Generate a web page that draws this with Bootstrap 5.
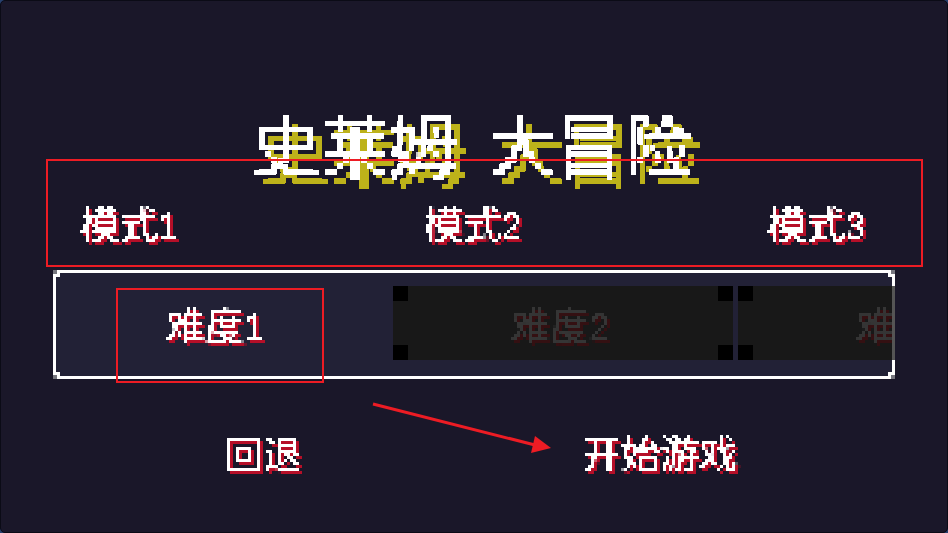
<!DOCTYPE html>
<html lang="zh-CN">
<head>
<meta charset="utf-8">
<title>史莱姆 大冒险</title>
<link rel="stylesheet" href="https://cdn.jsdelivr.net/npm/bootstrap@5.3.0/dist/css/bootstrap.min.css">
<style>
html,body{height:100%;margin:0;background:#27406e;overflow:hidden}
body{font-family:"Noto Sans CJK SC","Liberation Sans",sans-serif}
.stage{width:948px;height:533px;background:#1a1729;border:1px solid #0b0b16;border-radius:5px;position:relative;overflow:hidden}
.game-title{font-size:68px;line-height:68px;height:68px;margin:108px 0 0 0;padding-right:4px;color:#fff;white-space:pre;word-spacing:15px;font-weight:400;filter:url(#px6) drop-shadow(9px 9px 0 #bdb21a)}
.pix{font-size:39px;line-height:44px;height:44px;color:#fff;white-space:nowrap;filter:url(#px3) drop-shadow(3px 3px 0 #b50f28)}
.dg{font-family:"Liberation Sans Narrow","Liberation Sans",sans-serif;font-size:36px;line-height:1}
.mode-row{padding:23px 82px 0 79px}
.diff-panel{height:109px;width:842px;margin:26px 0 0 52px;border:3px solid #fff;background:#222136;position:relative}
.diff-clip{height:100%;overflow:hidden}
.diff-track{width:1200px;margin-left:-8px;gap:5px;height:74px;margin-top:13px}
.diff-item{flex:0 0 340px;position:relative}
.diff-item .pix{margin-right:6px}
.diff-off{background:#181818}
.diff-off .pix{color:#353535;filter:url(#px3) drop-shadow(3px 3px 0 #341012)}
.nick{position:absolute;width:15px;height:15px;background:#000}
.nick-a{top:0;left:0}.nick-b{top:0;right:0}.nick-c{bottom:0;left:0}.nick-d{bottom:0;right:0}
.edge-shade{position:absolute;right:-3px;top:13px;width:3px;height:74px;background:#555}
.step{position:absolute;width:4px;height:4px;background:#77777f}
.step-a{left:-3px;top:-3px;box-shadow:3px 3px 0 #fff}
.step-b{right:-3px;top:-3px;box-shadow:-3px 3px 0 #fff}
.step-c{left:-3px;bottom:-3px;box-shadow:3px -3px 0 #fff}
.step-d{right:-3px;bottom:-3px;box-shadow:-3px -3px 0 #fff}
.action-row{padding:50px 0 0 223px;gap:280px}
.notes{position:absolute;left:-1px;top:-1px;pointer-events:none}
</style>
</head>
<body>
<svg width="0" height="0" class="position-absolute">
  <defs>
    <filter id="px6" x="-5%" y="-20%" width="110%" height="140%" primitiveUnits="userSpaceOnUse" color-interpolation-filters="sRGB">
      <feFlood x="2" y="2" width="2" height="2" flood-color="#fff"/>
      <feComposite width="6" height="6"/>
      <feTile result="dots"/>
      <feComposite in="SourceGraphic" in2="dots" operator="in"/>
      <feComponentTransfer><feFuncA type="linear" slope="30" intercept="-9"/></feComponentTransfer>
      <feMorphology operator="dilate" radius="2"/>
    </filter>
    <filter id="px3" x="-5%" y="-20%" width="110%" height="140%" primitiveUnits="userSpaceOnUse" color-interpolation-filters="sRGB">
      <feFlood x="1" y="1" width="1" height="1" flood-color="#fff"/>
      <feComposite width="3" height="3"/>
      <feTile result="dots"/>
      <feComposite in="SourceGraphic" in2="dots" operator="in"/>
      <feComponentTransfer><feFuncA type="linear" slope="12" intercept="-2"/></feComponentTransfer>
      <feMorphology operator="dilate" radius="1"/>
    </filter>
  </defs>
</svg>
<main class="stage d-flex flex-column">
  <h1 class="game-title text-center">史莱姆 大冒险</h1>
  <div class="mode-row d-flex justify-content-between">
    <div class="pix">模式<span class="dg">1</span></div>
    <div class="pix">模式<span class="dg">2</span></div>
    <div class="pix">模式<span class="dg">3</span></div>
  </div>
  <div class="diff-panel">
    <div class="diff-clip">
      <div class="diff-track d-flex">
        <div class="diff-item d-flex align-items-center justify-content-center"><div class="pix">难度<span class="dg">1</span></div></div>
        <div class="diff-item diff-off d-flex align-items-center justify-content-center">
          <i class="nick nick-a"></i><i class="nick nick-b"></i><i class="nick nick-c"></i><i class="nick nick-d"></i>
          <div class="pix">难度<span class="dg">2</span></div>
        </div>
        <div class="diff-item diff-off d-flex align-items-center justify-content-center">
          <i class="nick nick-a"></i><i class="nick nick-b"></i><i class="nick nick-c"></i><i class="nick nick-d"></i>
          <div class="pix">难度<span class="dg">3</span></div>
        </div>
      </div>
    </div>
    <span class="edge-shade"></span>
    <i class="step step-a"></i><i class="step step-b"></i><i class="step step-c"></i><i class="step step-d"></i>
  </div>
  <div class="action-row d-flex">
    <div class="pix">回退</div>
    <div class="pix">开始游戏</div>
  </div>
  <svg class="notes" width="948" height="533" viewBox="0 0 948 533">
    <rect x="47" y="160" width="875" height="106" fill="none" stroke="#ed1c24" stroke-width="2"/>
    <rect x="117" y="289" width="206" height="93" fill="none" stroke="#ed1c24" stroke-width="2"/>
    <line x1="373" y1="404" x2="535" y2="445" stroke="#ed1c24" stroke-width="3"/>
    <polygon points="535,436 551,448 531,453" fill="#ed1c24"/>
  </svg>
</main>
<script src="https://cdn.jsdelivr.net/npm/bootstrap@5.3.0/dist/js/bootstrap.bundle.min.js"></script>
</body>
</html>
